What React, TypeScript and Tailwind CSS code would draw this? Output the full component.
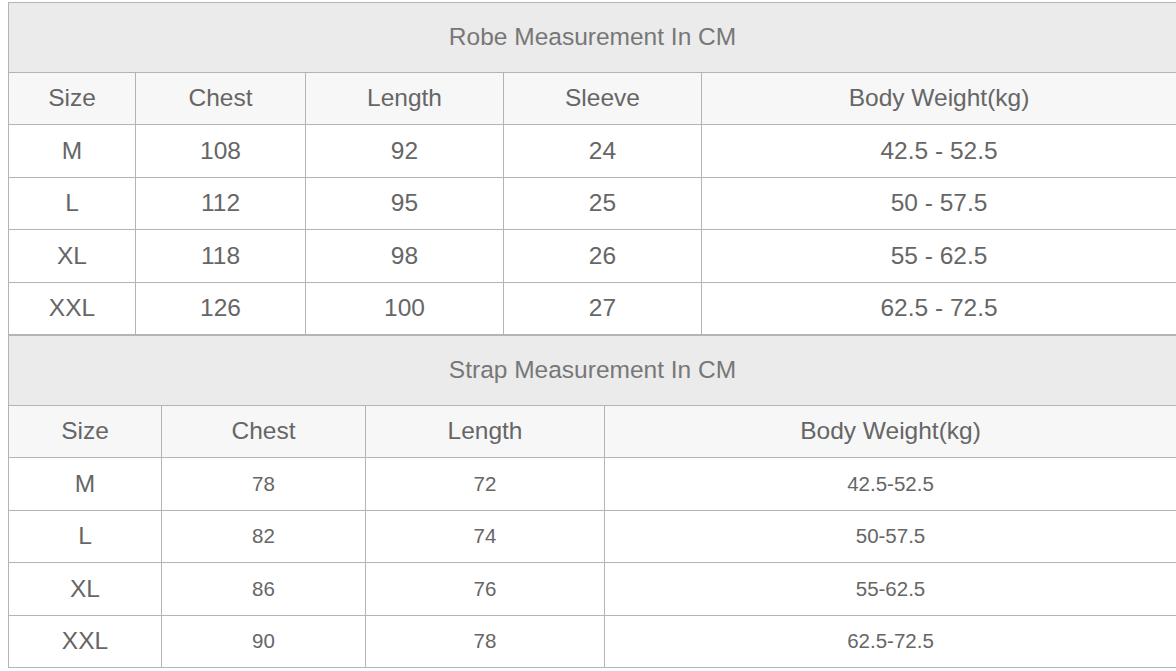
const robeCols = [127, 170, 198, 198, 475];
const robeHead = ["Size", "Chest", "Length", "Sleeve", "Body Weight(kg)"];
const robeRows = [
  ["M", "108", "92", "24", "42.5 - 52.5"],
  ["L", "112", "95", "25", "50 - 57.5"],
  ["XL", "118", "98", "26", "55 - 62.5"],
  ["XXL", "126", "100", "27", "62.5 - 72.5"],
];

const strapCols = [153, 204, 239, 572];
const strapHead = ["Size", "Chest", "Length", "Body Weight(kg)"];
const strapRows = [
  ["M", "78", "72", "42.5-52.5"],
  ["L", "82", "74", "50-57.5"],
  ["XL", "86", "76", "55-62.5"],
  ["XXL", "90", "78", "62.5-72.5"],
];

interface SizeTableProps {
  title: string;
  cols: number[];
  head: string[];
  rows: string[][];
  small?: boolean;
}

const SizeTable = ({ title, cols, head, rows, small }: SizeTableProps) => {
  return (
    <table className="w-[1168px] table-fixed border-collapse border border-[#b4b4b4] text-center text-[#666666]">
      <colgroup>
        {cols.map((w, i) => (
          <col key={i} style={{ width: w }} />
        ))}
      </colgroup>
      <thead>
        {/* Title */}
        <tr className="h-[70px] bg-[#ebebeb]">
          <th
            colSpan={cols.length}
            className="border border-[#b4b4b4] text-[24.5px] font-normal text-[#777777]"
          >
            {title}
          </th>
        </tr>
        {/* Column names */}
        <tr className="h-[52px] bg-[#f7f7f7]">
          {head.map((h) => (
            <th key={h} className="border border-[#b4b4b4] text-[24.5px] font-normal">
              {h}
            </th>
          ))}
        </tr>
      </thead>
      <tbody>
        {rows.map((r) => (
          <tr key={r[0]} className="h-[52.5px] bg-white">
            {r.map((c, i) => (
              <td
                key={i}
                className={
                  small && i > 0
                    ? "border border-[#b4b4b4] p-0 text-[20.5px] leading-none"
                    : "border border-[#b4b4b4] p-0 text-[24.5px] leading-none"
                }
              >
                {c}
              </td>
            ))}
          </tr>
        ))}
      </tbody>
    </table>
  );
};

export default function App() {
  return (
    <div className="min-h-[671px] bg-white pl-[8px] pt-[2px] font-['Liberation_Sans',Arial,sans-serif]">
      <SizeTable
        title="Robe Measurement In CM"
        cols={robeCols}
        head={robeHead}
        rows={robeRows}
      />
      <SizeTable
        title="Strap Measurement In CM"
        cols={strapCols}
        head={strapHead}
        rows={strapRows}
        small
      />
    </div>
  );
}
